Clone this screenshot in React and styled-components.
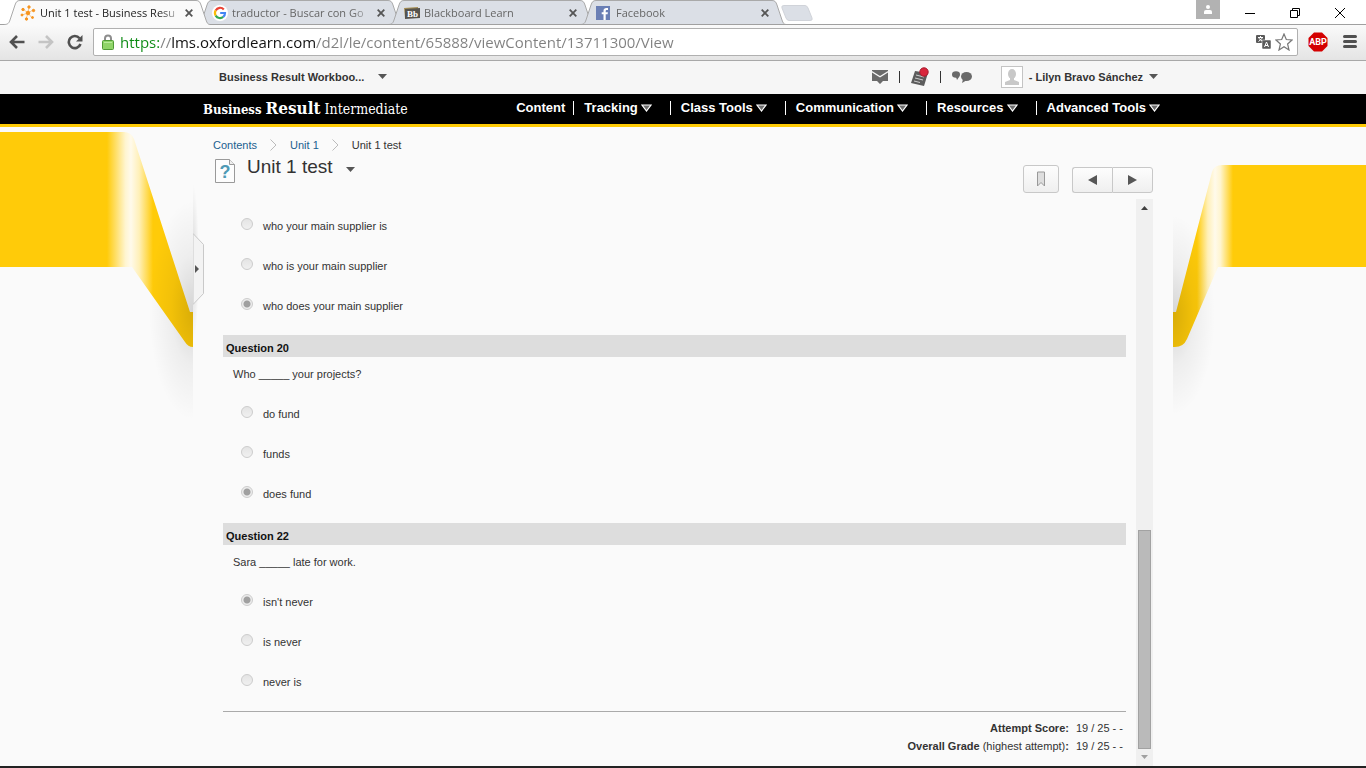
import React from 'react'
import styled, { createGlobalStyle } from 'styled-components'

const tabs = [
  { title: 'Unit 1 test - Business Resu', icon: 'oxford', active: true },
  { title: 'traductor - Buscar con Go', icon: 'google' },
  { title: 'Blackboard Learn', icon: 'blackboard' },
  { title: 'Facebook', icon: 'facebook' },
]

const menu = ['Tracking', 'Class Tools', 'Communication', 'Resources', 'Advanced Tools']

const questions = [
  {
    id: 19,
    options: ['who your main supplier is', 'who is your main supplier', 'who does your main supplier'],
    answer: 2,
  },
  {
    id: 20,
    prompt: 'Who _____ your projects?',
    options: ['do fund', 'funds', 'does fund'],
    answer: 2,
  },
  {
    id: 22,
    prompt: 'Sara _____ late for work.',
    options: ["isn't never", 'is never', 'never is'],
    answer: 0,
  },
]

const Favicon = ({ name }) => {
  if (name === 'oxford') {
    return (
      <svg width="16" height="16" viewBox="0 0 16 16" fill="#f7941e" stroke="#f7941e">
        <path d="M8 8 9 2M8 8 3 4M8 8 13 5M8 8 2 10M8 8 6 14M8 8 12 13" strokeWidth=".5" />
        <circle cx="8" cy="8" r="1.800" />
        <circle cx="9" cy="2" r="1.200" />
        <circle cx="3" cy="4.500" r="1.200" />
        <circle cx="13.500" cy="5.500" r="1.200" />
        <circle cx="2" cy="10" r="1" />
        <circle cx="6.500" cy="14" r="1.200" />
        <circle cx="12.500" cy="12.500" r="1" />
      </svg>
    )
  }
  if (name === 'google') {
    return (
      <svg width="16" height="16" viewBox="0 0 16 16" fill="none" strokeWidth="2.2">
        <circle cx="8" cy="8" r="8" fill="#fff" />
        <path d="M11.8 4.4A5 5 0 0 0 3.7 5.4" stroke="#ea4335" />
        <path d="M3.7 5.4A5 5 0 0 0 3.7 10.6" stroke="#fbbc05" />
        <path d="M3.7 10.6A5 5 0 0 0 11.2 11.9" stroke="#34a853" />
        <path d="M11.2 11.9A5 5 0 0 0 13 8H8.2" stroke="#4285f4" />
      </svg>
    )
  }
  if (name === 'blackboard') {
    return (
      <svg width="16" height="16" viewBox="0 0 16 16">
        <path d="M0 3 14 2V12L1 13Z" fill="#a68f55" />
        <path d="M1 4 16 3V13L1 14Z" fill="#57544e" />
        <text x="3" y="12" fontFamily="Liberation Serif, serif" fontSize="9" fontWeight="700" fill="#fff">Bb</text>
      </svg>
    )
  }
  return (
    <svg width="14" height="14" viewBox="0 0 14 14">
      <rect width="14" height="14" fill="#6a7fb5" />
      <path d="M7.5 14V8.3H5.7V6.2H7.5V4.7C7.5 2.8 8.7 1.9 10.3 1.9H12V4H10.9C10 4 9.7 4.4 9.7 5.1V6.2H11.9L11.6 8.3H9.7V14Z" fill="#fff" />
    </svg>
  )
}

const TabShape = ({ active }) => (
  <Shape width="206" height="25" viewBox="0 0 206 25">
    <path
      d="M0 24.5C4 24.5 5 23 6 20L11 5C12 2 13 .5 16 .5H192C195 .5 196 2 197 5L202 20C203 23 204 24.5 206 24.5V25H0Z"
      fill={active ? '#fafafa' : '#dbdfe6'}
    />
    <path
      d="M0 24.5C4 24.5 5 23 6 20L11 5C12 2 13 .5 16 .5H192C195 .5 196 2 197 5L202 20C203 23 204 24.5 206 24.5"
      fill="none"
      stroke="#a9a9a9"
    />
    {!active && <path d="M0 24.5H206" stroke="#a0a0a0" />}
  </Shape>
)

const Browser = () => (
  <header>
    <TabStrip>
      {tabs.map(tab => (
        <Tab key={tab.title} $active={tab.active}>
          <TabShape active={tab.active} />
          <TabIcon><Favicon name={tab.icon} /></TabIcon>
          <TabTitle $active={tab.active}>{tab.title}</TabTitle>
          <IconButton aria-label="Close tab">
            <svg width="8" height="8" viewBox="0 0 8 8" stroke="#555" strokeWidth="1.8">
              <path d="M.7.7 7.3 7.3M7.3.7.7 7.3" />
            </svg>
          </IconButton>
        </Tab>
      ))}
      <NewTab aria-label="New tab">
        <svg width="32" height="16" viewBox="0 0 32 16">
          <path d="M3 .5H24Q26 .5 27 3L31 13Q32 15.500 29 15.500H8Q6 15.500 5 13L1 3Q0 .5 3 .5Z" fill="#dbdfe6" stroke="#d0d3d9" />
        </svg>
      </NewTab>
      <WindowButtons>
        <Profile aria-label="Profile">
          <svg width="8" height="9" viewBox="0 0 8 9" fill="#fff">
            <circle cx="4" cy="2" r="2" />
            <path d="M0 9V7Q0 5 2 5H6Q8 5 8 7V9Z" />
          </svg>
        </Profile>
        <WindowButton aria-label="Minimize">
          <svg width="10" height="10" viewBox="0 0 10 10"><path d="M0 5.500H10" stroke="#000" /></svg>
        </WindowButton>
        <WindowButton aria-label="Restore">
          <svg width="10" height="10" viewBox="0 0 10 10" fill="none" stroke="#000">
            <path d="M.5 2.500H7.500V9.500H.5ZM2.500 2.500V.5H9.500V7.500H7.500" />
          </svg>
        </WindowButton>
        <WindowButton aria-label="Close">
          <svg width="10" height="10" viewBox="0 0 10 10" stroke="#000"><path d="M0 0 10 10M10 0 0 10" /></svg>
        </WindowButton>
      </WindowButtons>
    </TabStrip>
    <Toolbar>
      <ToolGroup $gap="13px">
        <IconButton aria-label="Back">
          <svg width="16" height="14" viewBox="0 0 16 14" fill="none" stroke="#505050" strokeWidth="2.6">
            <path d="M15.500 7H2.500M8 1 2 7 8 13" />
          </svg>
        </IconButton>
        <IconButton aria-label="Forward">
          <svg width="16" height="14" viewBox="0 0 16 14" fill="none" stroke="#c4c4c4" strokeWidth="2.6">
            <path d="M.5 7H13.500M8 1 14 7 8 13" />
          </svg>
        </IconButton>
        <IconButton aria-label="Reload">
          <svg width="16" height="16" viewBox="0 0 16 16">
            <path d="M12.500 4.300A6 6 0 1 0 13.500 10" fill="none" stroke="#505050" strokeWidth="2.600" />
            <path d="M15.500 1V7.500H9Z" fill="#505050" />
          </svg>
        </IconButton>
      </ToolGroup>
      <Omnibox>
        <svg width="12" height="16" viewBox="0 0 12 16">
          <path d="M3 8V4.500A3 3 0 0 1 9 4.500V8" fill="none" stroke="#8d8d8d" strokeWidth="2" />
          <rect x=".5" y="6.500" width="11" height="9" rx="1" fill="#8fd468" stroke="#4f9a35" />
          <path d="M2 8.500H10" stroke="#b9eb9c" />
        </svg>
        <Address
          aria-label="Address"
          defaultValue="https://lms.oxfordlearn.com/d2l/le/content/65888/viewContent/13711300/View"
        />
        <IconButton aria-label="Translate">
          <svg width="15" height="14" viewBox="0 0 15 14">
            <rect width="9" height="8" rx="1" fill="#5a5a5a" />
            <path d="M2 2.500H7M4.500 1V2.500M6.500 3 2.500 6.500M2.500 3 6.500 6.500" stroke="#fff" fill="none" />
            <rect x="6" y="5" width="9" height="9" rx="1" fill="#5a5a5a" stroke="#fff" strokeWidth=".5" />
            <path d="M8.500 12 10.500 7 12.500 12M9 10.500H12" stroke="#fff" fill="none" />
          </svg>
        </IconButton>
        <IconButton aria-label="Bookmark this page">
          <svg width="18" height="18" viewBox="0 0 18 18">
            <path d="M9 1 11.300 6.500 17 7 12.600 11 14 17 9 13.800 4 17 5.400 11 1 7 6.700 6.500Z" fill="#fff" stroke="#777" strokeWidth="1.200" />
          </svg>
        </IconButton>
      </Omnibox>
      <ToolGroup $gap="15px">
        <IconButton aria-label="Adblock Plus">
          <svg width="20" height="20" viewBox="0 0 20 20">
            <path d="M6 .5H14L19.500 6V14L14 19.500H6L.5 14V6Z" fill="#d40000" />
            <text x="10" y="13" textAnchor="middle" fontFamily="Roboto, sans-serif" fontSize="9" fontWeight="700" fill="#fff">ABP</text>
          </svg>
        </IconButton>
        <IconButton aria-label="Menu">
          <svg width="14" height="13" viewBox="0 0 14 13" stroke="#505050" strokeWidth="3" strokeLinecap="round">
            <path d="M1.500 1.500H12.500M1.500 6.500H12.500M1.500 11.500H12.500" />
          </svg>
        </IconButton>
      </ToolGroup>
    </Toolbar>
  </header>
)

const Caret = () => (
  <svg width="9" height="5" viewBox="0 0 9 5"><path d="M0 0H9L4.500 5Z" fill="#565656" /></svg>
)

const UserBar = () => (
  <Strip>
    <Inner>
      <UserRow>
        <CourseButton>Business Result Workboo... <Caret /></CourseButton>
        <Alerts>
          <IconButton aria-label="Messages">
            <svg width="16" height="14" viewBox="0 0 16 14" fill="#6a6a6a">
              <path d="M0 0H16V1L8 6 0 1Z" />
              <path d="M0 2.500 8 7.500 16 2.500V11H11L8 14 5 11H0Z" />
            </svg>
          </IconButton>
          <Bar />
          <IconButton aria-label="Subscriptions">
            <svg width="18" height="20" viewBox="0 0 18 20">
              <path d="M4 4 17 6 13 19 0 16Z" fill="#5c5c5c" />
              <path d="M5 8 13 10M4 11 12 13M3 14 9 15.500" stroke="#ccc" />
              <circle cx="13" cy="5" r="4.200" fill="#d9263c" stroke="#a81c2f" />
            </svg>
          </IconButton>
          <Bar />
          <IconButton aria-label="Chat">
            <svg width="20" height="12" viewBox="0 0 20 12" fill="#6a6a6a">
              <ellipse cx="4" cy="3.500" rx="4" ry="3.200" />
              <path d="M4 6 5 9 7 6Z" />
              <ellipse cx="14.500" cy="5.500" rx="5.500" ry="4.500" />
              <path d="M11 8 10 12 15 9Z" />
            </svg>
          </IconButton>
        </Alerts>
        <ProfileButton>
          <Avatar>
            <svg width="18" height="18" viewBox="0 0 18 18" fill="#c8c8c8">
              <ellipse cx="9" cy="6" rx="4" ry="5" />
              <path d="M7 9H11V12L16 14V17H2V14L7 12Z" />
            </svg>
          </Avatar>
          - Lilyn Bravo Sánchez <Caret />
        </ProfileButton>
      </UserRow>
    </Inner>
  </Strip>
)

const NavBar = () => (
  <Black>
    <Inner>
      <NavRow>
        <Logo>
          <b>Business</b> <strong>Result</strong> Intermediate
        </Logo>
        <Nav>
          <NavLink href="#content">Content</NavLink>
          {menu.map(item => (
            <NavButton key={item}>
              {item}
              <svg width="11" height="8" viewBox="0 0 11 8">
                <path d="M1 1H10L5.500 7Z" fill="#6e6e6e" stroke="#fff" strokeWidth="1.200" />
              </svg>
            </NavButton>
          ))}
        </Nav>
      </NavRow>
    </Inner>
  </Black>
)

const LeftRibbon = () => (
  <Ribbon width="193" height="300" viewBox="0 127 193 300">
    <defs>
      <linearGradient id="leftFold" gradientUnits="userSpaceOnUse" x1="107" y1="0" x2="153" y2="0">
        <stop offset="0" stopColor="#ffcb09" />
        <stop offset=".4" stopColor="#fff5d0" />
        <stop offset=".52" stopColor="#fffaeb" />
        <stop offset=".7" stopColor="#fff0b8" />
        <stop offset="1" stopColor="#ffcb09" />
      </linearGradient>
      <radialGradient id="leftShade" gradientUnits="userSpaceOnUse" cx="0" cy="0" r="1" gradientTransform="translate(193 310) scale(44 110)">
        <stop offset="0" stopColor="#000" stopOpacity=".15" />
        <stop offset=".5" stopColor="#000" stopOpacity=".05" />
        <stop offset="1" stopColor="#000" stopOpacity="0" />
      </radialGradient>
    </defs>
    <path d="M-2000 132H124Q131 132 134 139L190 312H193V347Q188 347 185 342L132 267H-2000Z" fill="url(#leftFold)" />
    <path d="M110 180H193V427H110Z" fill="url(#leftShade)" />
  </Ribbon>
)

const RightRibbon = () => (
  <Ribbon width="193" height="300" viewBox="1173 127 193 300">
    <defs>
      <linearGradient id="rightFold" gradientUnits="userSpaceOnUse" x1="1197" y1="0" x2="1233" y2="0">
        <stop offset="0" stopColor="#ffcb09" />
        <stop offset=".3" stopColor="#fff0b8" />
        <stop offset=".5" stopColor="#fffaeb" />
        <stop offset=".65" stopColor="#fff5d0" />
        <stop offset="1" stopColor="#ffcb09" />
      </linearGradient>
      <radialGradient id="rightShade" gradientUnits="userSpaceOnUse" cx="0" cy="0" r="1" gradientTransform="translate(1173 315) scale(42 100)">
        <stop offset="0" stopColor="#000" stopOpacity=".15" />
        <stop offset=".5" stopColor="#000" stopOpacity=".05" />
        <stop offset="1" stopColor="#000" stopOpacity="0" />
      </radialGradient>
    </defs>
    <path d="M4000 165H1222Q1214 165 1212 172L1176 312H1173V347Q1183 348 1187 339L1218 267H4000Z" fill="url(#rightFold)" />
    <path d="M1173 180H1240V427H1173Z" fill="url(#rightShade)" />
  </Ribbon>
)

const Chevron = () => (
  <svg width="7" height="12" viewBox="0 0 7 12" fill="none" stroke="#bbb"><path d="M.5.5 6 6 .5 11.500" /></svg>
)

const Question = ({ question }) => (
  <Group>
    {question.prompt && <QuestionTitle>Question {question.id}</QuestionTitle>}
    {question.prompt && <Prompt>{question.prompt}</Prompt>}
    {question.options.map((option, i) => (
      <Option key={option}>
        <Radio type="radio" name={`q${question.id}`} defaultChecked={i === question.answer} />
        {option}
      </Option>
    ))}
  </Group>
)

const App = () => (
  <Page>
    <GlobalStyle />
    <Browser />
    <UserBar />
    <NavBar />
    <Body>
      <Side $align="flex-end"><LeftRibbon /></Side>
      <Main>
        <Drawer aria-label="Open side panel">
          <svg width="11" height="72" viewBox="0 0 11 72">
            <path d="M0 .5 10.500 11.500V60.500L0 71.500Z" fill="#f3f3f3" stroke="#c9c9c9" />
            <path d="M2 32V40L6 36Z" fill="#565656" />
          </svg>
        </Drawer>
        <Breadcrumbs>
          <a href="#contents">Contents</a>
          <Chevron />
          <a href="#unit">Unit 1</a>
          <Chevron />
          <span>Unit 1 test</span>
        </Breadcrumbs>
        <TitleRow>
          <TitleGroup>
            <svg width="20" height="24" viewBox="0 0 20 24">
              <path d="M.5.5H14.500L19.500 5.500V23.500H.5Z" fill="#fdfdfd" stroke="#9a9a9a" />
              <path d="M14.500.5V5.500H19.500" fill="#eee" stroke="#9a9a9a" />
              <text x="10" y="19" textAnchor="middle" fontFamily="Liberation Sans, sans-serif" fontSize="18" fontWeight="700" fill="#4f9ab5">?</text>
            </svg>
            <h1>Unit 1 test</h1>
            <IconButton aria-label="Page actions"><Caret /></IconButton>
          </TitleGroup>
          <Actions>
            <ActionButton $width="36px" $height="28px" aria-label="Bookmark">
              <svg width="8" height="16" viewBox="0 0 8 16"><path d="M.5 1H7.500V15L4 11.500.5 15Z" fill="#dedede" stroke="#999" /></svg>
            </ActionButton>
            <Pager>
              <ActionButton $width="40px" $height="26px" aria-label="Previous">
                <svg width="9" height="10" viewBox="0 0 9 10"><path d="M9 0V10L0 5Z" fill="#565656" /></svg>
              </ActionButton>
              <ActionButton $width="41px" $height="26px" aria-label="Next">
                <svg width="9" height="10" viewBox="0 0 9 10"><path d="M0 0V10L9 5Z" fill="#565656" /></svg>
              </ActionButton>
            </Pager>
          </Actions>
        </TitleRow>
        <Frame>
          <Quiz>
            {questions.map(question => <Question key={question.id} question={question} />)}
            <Scores>
              <dt>Attempt Score:</dt>
              <dd>19 / 25 - -</dd>
              <dt>Overall Grade <i>(highest attempt)</i>:</dt>
              <dd>19 / 25 - -</dd>
            </Scores>
          </Quiz>
          <Scrollbar>
            <svg width="7" height="4" viewBox="0 0 7 4"><path d="M0 4H7L3.500 0Z" fill="#404040" /></svg>
            <Track><Thumb /></Track>
            <svg width="7" height="4" viewBox="0 0 7 4"><path d="M0 0H7L3.500 4Z" fill="#a0a0a0" /></svg>
          </Scrollbar>
        </Frame>
      </Main>
      <Side $align="flex-start"><RightRibbon /></Side>
    </Body>
    <Taskbar />
  </Page>
)

const GlobalStyle = createGlobalStyle`
* {
  box-sizing: border-box;
}
body {
  margin: 0;
  background: #fafafa;
  color: #333;
  font-family: "Liberation Sans", Arial, sans-serif;
  font-size: 11px;
}
button {
  font: inherit;
  color: inherit;
  border: 0;
  padding: 0;
  background: none;
}
svg {
  display: block;
  flex-shrink: 0;
}
`;

const Page = styled.div`
  display: flex;
  flex-direction: column;
  min-height: 100vh;
`;

const TabStrip = styled.div`
  display: flex;
  height: 25px;
  padding: 0 4px;
  background: #fff;
  border-bottom: 1px solid #a0a0a0;
`;

const Tab = styled.div`
  position: relative;
  z-index: ${p => (p.$active ? 2 : 1)};
  display: flex;
  align-items: center;
  width: 206px;
  height: 25px;
  margin-right: -14px;
  padding: 0 17px 0 16px;
`;

const Shape = styled.svg`
  position: absolute;
  top: 0;
  left: 0;
`;

const TabIcon = styled.span`
  z-index: 1;
  width: 20px;
`;

const TabTitle = styled.span`
  z-index: 1;
  flex: 1;
  margin-right: 4px;
  white-space: nowrap;
  font-family: "Open Sans", sans-serif;
  font-size: 11px;
  color: ${p => (p.$active ? '#222' : '#666')};
  mask-image: linear-gradient(to right, #000 120px, #0002 140px);
`;

const IconButton = styled.button`
  z-index: 1;
`;

const NewTab = styled.button`
  align-self: flex-start;
  margin: 5px 0 0 9px;
`;

const WindowButtons = styled.div`
  display: flex;
  align-items: flex-start;
  margin-left: auto;
`;

const WindowButton = styled.button`
  display: flex;
  align-items: center;
  justify-content: center;
  width: 45px;
  height: 25px;
`;

const Profile = styled(WindowButton)`
  width: 24px;
  height: 19px;
  margin-right: 7px;
  background: #b2b2b2;
`;

const Toolbar = styled.div`
  display: flex;
  align-items: center;
  gap: 10px;
  height: 36px;
  padding: 0 9px 2px;
  background: linear-gradient(#fafafa, #e4e4e4);
  border-bottom: 1px solid #a8a8a8;
`;

const ToolGroup = styled.div`
  display: flex;
  align-items: center;
  gap: ${p => p.$gap};
`;

const Omnibox = styled.div`
  display: flex;
  flex: 1;
  align-items: center;
  gap: 4px;
  height: 28px;
  padding: 0 4px 0 8px;
  background: #fff;
  border: 1px solid #b0b0b0;
  border-radius: 2px;
`;

/* scheme in green, host in black, the rest in grey */
const Address = styled.input`
  flex: 1;
  padding: 0 0 0 2px;
  border: 0;
  outline: 0;
  font-family: "Open Sans", sans-serif;
  font-size: 15px;
  background: linear-gradient(to right, #0b8a13 42px, #808080 42px 54px, #111 54px 197px, #808080 197px);
  background-clip: text;
  -webkit-text-fill-color: transparent;
`;

const Strip = styled.div`
  background: #f6f6f6;
`;

const Inner = styled.div`
  max-width: 980px;
  margin: 0 auto;
`;

const UserRow = styled.div`
  display: flex;
  align-items: center;
  height: 33px;
  padding: 0 15px 2px 26px;
  font-weight: 700;
`;

const CourseButton = styled.button`
  display: flex;
  align-items: center;
  gap: 14px;
`;

const Alerts = styled.div`
  display: flex;
  align-items: center;
  gap: 11px;
  margin-left: auto;
`;

const Bar = styled.span`
  width: 1px;
  height: 12px;
  background: #333;
`;

const ProfileButton = styled.button`
  display: flex;
  align-items: center;
  gap: 6px;
  margin-left: 29px;
`;

const Avatar = styled.span`
  padding: 1px;
  background: #fff;
  border: 1px solid #c4c4c4;
`;

const Black = styled.div`
  background: #000;
  border-bottom: 3px solid #ffcb05;
  color: #fff;
`;

const NavRow = styled.div`
  display: flex;
  align-items: center;
  justify-content: space-between;
  height: 30px;
  padding: 0 13px 2px 10px;
`;

const Logo = styled.div`
  font-family: "DejaVu Serif Condensed", "DejaVu Serif", serif;
  font-size: 14px;
  b {
    font-size: 13px;
  }
  strong {
    font-size: 17px;
  }
`;

const Nav = styled.nav`
  display: flex;
  align-items: center;
  font-size: 13px;
  font-weight: 700;
  line-height: 14px;
`;

const NavLink = styled.a`
  padding-right: 8px;
  color: #fff;
  text-decoration: none;
`;

const NavButton = styled.button`
  display: flex;
  align-items: center;
  gap: 3px;
  padding: 0 18px 0 10px;
  border-left: 1px solid #fff;
  &:last-child {
    padding-right: 0;
  }
`;

const Body = styled.div`
  display: flex;
  flex: 1;
`;

const Side = styled.div`
  display: flex;
  flex: 1;
  justify-content: ${p => p.$align};
  align-items: flex-start;
  min-width: 0;
  overflow: hidden;
`;

const Ribbon = styled.svg`
  overflow: visible;
`;

const Main = styled.main`
  position: relative;
  display: flex;
  flex-direction: column;
  width: 980px;
  padding: 10px 20px 0;
`;

const Drawer = styled.button`
  position: absolute;
  top: 106px;
  left: 0;
  &::before {
    content: "";
    position: absolute;
    z-index: -1;
    top: -50px;
    left: 0;
    width: 6px;
    height: 160px;
    background: radial-gradient(ellipse at left, #00000022, transparent 70%);
  }
`;

const Breadcrumbs = styled.nav`
  display: flex;
  align-items: center;
  gap: 13px;
  height: 16px;
  color: #333;
  a {
    color: #1b608f;
    text-decoration: none;
  }
`;

const TitleRow = styled.div`
  display: flex;
  justify-content: space-between;
  height: 46px;
`;

const TitleGroup = styled.div`
  display: flex;
  align-items: flex-start;
  padding: 6px 0 0 2px;
  h1 {
    margin: 0 13px 0 12px;
    font-size: 19px;
    line-height: 16px;
    font-weight: 400;
  }
  button {
    padding-top: 8px;
  }
`;

const Actions = styled.div`
  display: flex;
  align-items: flex-end;
  gap: 13px;
  padding-bottom: 6px;
`;

const ActionButton = styled.button`
  display: flex;
  align-items: center;
  justify-content: center;
  width: ${p => p.$width};
  height: ${p => p.$height};
  border: 1px solid #c8c8c8;
  border-radius: 3px;
  background: linear-gradient(#fdfdfd, #efefef);
`;

const Pager = styled.div`
  display: flex;
  button:first-child {
    border-right: 0;
    border-radius: 3px 0 0 3px;
  }
  button:last-child {
    border-radius: 0 3px 3px 0;
  }
`;

const Frame = styled.div`
  display: flex;
  flex: 1;
  gap: 10px;
`;

const Quiz = styled.div`
  flex: 1;
  padding: 7px 0 8px 10px;
`;

const Group = styled.section`
  margin-bottom: 9px;
`;

const QuestionTitle = styled.h2`
  margin: 0;
  padding: 4px 3px 0;
  background: #ddd;
  color: #111;
  font-size: 11px;
  line-height: 18px;
`;

const Prompt = styled.p`
  margin: 0 0 3px;
  padding-left: 10px;
  line-height: 34px;
`;

const Option = styled.label`
  display: flex;
  align-items: center;
  gap: 10px;
  height: 40px;
  padding-left: 18px;
`;

const Radio = styled.input`
  appearance: none;
  width: 12px;
  height: 12px;
  margin: 0 0 4px;
  border: 1px solid #ccc;
  border-radius: 50%;
  background: linear-gradient(#e4e4e4, #f0f0f0);
  &:checked {
    background: radial-gradient(circle, #a0a0a0 3px, #ececec 4px);
  }
`;

const Scores = styled.dl`
  display: grid;
  grid-template-columns: 1fr auto;
  column-gap: 7px;
  margin: 0;
  padding: 7px 3px 0 0;
  border-top: 1px solid #aaa;
  line-height: 18px;
  text-align: right;
  dt {
    font-weight: 700;
  }
  dd {
    margin: 0;
  }
  i {
    font-weight: 400;
    font-style: normal;
  }
`;

const Scrollbar = styled.div`
  display: flex;
  flex-direction: column;
  align-items: center;
  width: 17px;
  padding: 7px 0;
  background: #f0f0f0;
`;

const Track = styled.div`
  display: flex;
  flex: 1;
  align-items: flex-end;
  margin: 6px 0;
`;

const Thumb = styled.div`
  width: 13px;
  height: 41%;
  background: #bababa;
  border: 1px solid #a2a2a2;
`;

const Taskbar = styled.footer`
  height: 2px;
  background: #222;
`;

export default App
